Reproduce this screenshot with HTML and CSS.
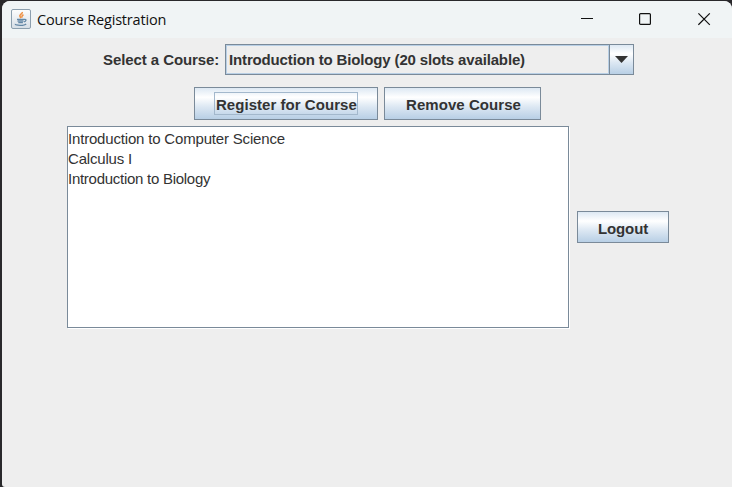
FILE: index.html
```html
<!DOCTYPE html>
<html lang="en">
<head>
<meta charset="utf-8">
<title>Course Registration</title>
<link rel="stylesheet" href="styles.css">
</head>
<body>
<div class="window">
  <header class="titlebar">
    <svg class="app-icon" width="20" height="20" viewBox="0 0 20 20" fill="none">
      <defs><linearGradient id="tile" x2="0" y2="1"><stop stop-color="#fdfdfd"/><stop offset="1" stop-color="#d6dee6"/></linearGradient></defs>
      <rect x=".5" y=".5" width="19" height="19" rx="1.5" fill="url(#tile)" stroke="#8c9fae"/>
      <path d="M11.3 3c.5 2-3.600 2.500-2.300 4.500l1 1.500M12.500 5.700c-2 1-1.800 1.600-1.200 2.800" stroke="#ef9145" stroke-width="1.600"/>
      <path d="M6 10.300h7.300M6.500 12h6M7.300 13.700h4.600M13.300 10.500c2.600-.5 1.900 2-.4 2.300M4.300 14.800c-.5 2 9.500 2 10.800 0" stroke="#6488a6" stroke-width="1.300"/>
    </svg>
    <h1 class="title">Course Registration</h1>
    <div class="controls">
      <svg width="13" height="13" viewBox="0 0 13 13"><path d="M1 5.500h12" stroke="#111"/></svg>
      <svg width="13" height="13" viewBox="0 0 13 13"><rect x=".6" y=".6" width="10.800" height="10.800" rx="1" fill="none" stroke="#111" stroke-width="1.200"/></svg>
      <svg width="13" height="13" viewBox="0 0 13 13"><path d="M.4.400l11.400 11.400M11.800.400L.4 11.800" stroke="#111" stroke-width="1.200"/></svg>
    </div>
  </header>
  <main class="content">
    <div class="row select-row">
      <span class="label">Select a Course:</span>
      <div class="combo">
        <div class="combo-value">Introduction to Biology (20 slots available)</div>
        <div class="combo-arrow"><svg width="13" height="7" viewBox="0 0 13 7"><path d="M0 0h13L6.500 7z" fill="#333"/></svg></div>
      </div>
    </div>
    <div class="row button-row">
      <button class="button register"><span class="focus">Register for Course</span></button>
      <button class="button remove"><span>Remove Course</span></button>
    </div>
    <div class="row list-row">
      <ul class="list">
        <li>Introduction to Computer Science</li>
        <li>Calculus I</li>
        <li class="tight">Introduction to Biology</li>
      </ul>
      <button class="button logout"><span>Logout</span></button>
    </div>
  </main>
</div>
</body>
</html>
```
FILE: styles.css
```css
* { box-sizing: border-box; }
body {
  margin: 0;
  padding: 1px 0 0 2px;
  height: 487px;
  overflow: hidden;
  background: #29282b;
  color: #333;
  font: 15px/20px "Liberation Sans", Arial, sans-serif;
}
.window {
  height: 486px;
  overflow: hidden;
  background: #eee;
  border-radius: 8px 8px 0 3px;
}
.titlebar {
  height: 37px;
  display: flex;
  align-items: center;
  padding: 0 15px 0 9px;
  background: #f0f4f5;
}
.app-icon { margin-top: -2px; }
.title {
  margin: 0 auto 0 6px;
  color: #111;
  font: 400 14.5px/20px "Open Sans", "Noto Sans", sans-serif;
  letter-spacing: -0.18px;
  white-space: nowrap;
}
.controls { display: flex; gap: 46px; padding-right: 6px; }
.controls svg, .app-icon { display: block; }
.content { display: flex; flex-direction: column; }
.row { display: flex; white-space: nowrap; }
.select-row { padding: 6px 0 0 101px; }
.label {
  width: 122px;
  line-height: 32px;
  font-weight: bold;
  letter-spacing: -0.08px;
}
.combo {
  width: 409px;
  height: 31px;
  display: flex;
  border: 1px solid #7a8a99;
  font-weight: bold;
}
.combo-value {
  flex: 1;
  border: 1px solid #b8cfe5;
  padding: 0 2px;
  line-height: 27px;
  letter-spacing: -0.15px;
}
.combo-arrow {
  width: 24px;
  display: flex;
  align-items: center;
  justify-content: center;
  border-left: 1px solid #7a8a99;
  background: linear-gradient(#dde8f3, #fff 30%, #dde8f3 60%, #b8cfe5);
}
.button-row { gap: 6px; padding: 12px 0 0 192px; margin-top: -1px; }
.button {
  display: flex;
  align-items: center;
  justify-content: center;
  padding: 0;
  color: #333;
  font: bold 15px/20px "Liberation Sans", Arial, sans-serif;
  border: 1px solid #7a8a99;
  background: linear-gradient(#dde8f3, #fff 30%, #dde8f3 60%, #b8cfe5);
}
.button > span { padding-top: 2px; }
.register { width: 184px; height: 33px; }
.remove { width: 157px; height: 33px; padding-left: 2px; letter-spacing: 0.06px; }
.button > .focus {
  width: 144px;
  height: 23px;
  padding: 2px 0 0 1px;
  text-align: left;
  letter-spacing: 0.04px;
  border: 1px solid #a3b8cc;
}
.list-row { align-items: center; gap: 8px; padding: 6px 0 0 65px; }
.list {
  width: 502px;
  height: 202px;
  margin: 0;
  padding: 2px 0;
  list-style: none;
  letter-spacing: -0.18px;
  background: #fff;
  border: 1px solid #7a8a99;
  box-shadow: 1px 1px #fff;
}
.tight { letter-spacing: -0.27px; }
.logout { width: 92px; height: 32px; letter-spacing: -0.1px; }
.logout > span { padding-top: 4px; }
```
